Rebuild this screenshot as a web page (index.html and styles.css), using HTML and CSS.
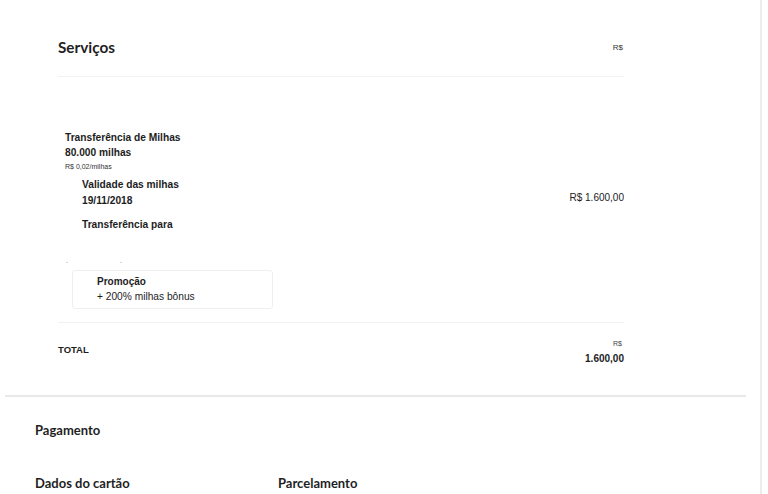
FILE: index.html
```html
<!DOCTYPE html>
<html lang="pt-BR">
<head>
<meta charset="utf-8">
<title>Serviços</title>
<link rel="stylesheet" href="styles.css">
</head>
<body>
<div class="panel">
  <section class="services">
    <div class="svc-head">
      <h2 class="title">Serviços</h2>
      <span class="cur-small">R$</span>
    </div>
    <div class="item">
      <div class="item-info">
        <div class="l-bold">Transferência de Milhas</div>
        <div class="l-bold">80.000 milhas</div>
        <div class="l-unit">R$ 0,02/milhas</div>
        <div class="sub">
          <div class="l-bold sub-a">Validade das milhas</div>
          <div class="l-bold sub-b">19/11/2018</div>
          <div class="l-bold sub-c">Transferência para</div>
        </div>
        <div class="dots"><span></span><span class="d2"></span></div>
      </div>
      <div class="item-price">R$ 1.600,00</div>
    </div>
    <div class="promo">
      <div class="promo-title">Promoção</div>
      <div class="promo-text">+ 200% milhas bônus</div>
    </div>
    <div class="total">
      <div class="total-label">TOTAL</div>
      <div class="total-value">
        <div class="tv-cur">R$</div>
        <div class="tv-num">1.600,00</div>
      </div>
    </div>
  </section>
  <hr class="full-divider">
  <section class="payment">
    <h2 class="h-pay">Pagamento</h2>
    <div class="pay-cols">
      <h3 class="h-col col-a">Dados do cartão</h3>
      <h3 class="h-col">Parcelamento</h3>
    </div>
  </section>
</div>
</body>
</html>
```

FILE: styles.css
```css
html, body {
  margin: 0;
  padding: 0;
  background: #ffffff;
  height: 100%;
  overflow: hidden;
}
body {
  font-family: "Liberation Sans", Arial, sans-serif;
  color: #1d1d1d;
}
.panel {
  width: 762px;
  height: 494px;
  padding-top: 37px;
  box-sizing: border-box;
  border-right: 2px solid #ececec;
  overflow: hidden;
}
.services {
  margin-left: 58px;
  width: 566px;
}
.svc-head {
  display: flex;
  justify-content: space-between;
  align-items: center;
  height: 20px;
  padding-bottom: 19px;
  border-bottom: 1px solid #f2f2f2;
}
.title {
  margin: 0;
  font-family: "Lato", "Noto Sans", sans-serif;
  font-weight: 700;
  font-size: 15.3px;
  color: #1f1f1f;
}
.cur-small {
  font-size: 8px;
  color: #333;
  margin-right: 1px;
}
.item {
  display: flex;
  justify-content: space-between;
  align-items: center;
  padding-left: 7px;
  margin-top: 53px;
}
.l-bold {
  font-weight: 700;
  font-size: 10.2px;
  line-height: 15px;
}
.l-unit {
  font-size: 7px;
  line-height: 14px;
  color: #333;
}
.sub {
  padding-left: 17px;
}
.sub-a { margin-top: 3px; }
.sub-b { margin-top: 1px; }
.sub-c { margin-top: 9px; }
.dots {
  display: flex;
  height: 4px;
  margin-top: 28px;
  align-items: center;
}
.dots span {
  width: 2px;
  height: 1px;
  background: #d8d8d8;
  margin-left: 1px;
}
.dots .d2 {
  margin-left: 52px;
}
.item-price {
  font-size: 10px;
  color: #222;
}
.promo {
  margin-top: 6px;
  margin-left: 14px;
  width: 201px;
  border: 1px solid #efefef;
  border-radius: 3px;
  padding: 4px 0 4px 24px;
  box-sizing: border-box;
}
.promo-title {
  font-weight: 700;
  font-size: 10px;
  line-height: 14px;
}
.promo-text {
  font-size: 10.2px;
  line-height: 14px;
  margin-top: 1px;
}
.total {
  margin-top: 13px;
  border-top: 1px solid #f2f2f2;
  padding-top: 15px;
  display: flex;
  justify-content: space-between;
  align-items: flex-start;
}
.total-label {
  font-weight: 700;
  font-size: 9.5px;
  line-height: 14px;
  margin-top: 5px;
}
.total-value {
  text-align: right;
}
.tv-cur {
  font-size: 7px;
  line-height: 12px;
  color: #444;
  margin-right: 2px;
}
.tv-num {
  font-weight: 700;
  font-size: 10px;
  line-height: 14px;
  margin-top: 2px;
}
.full-divider {
  margin: 29px 14px 0 5px;
  border: 0;
  height: 2px;
  background: #e9e9e9;
}
.payment {
  padding-left: 35px;
}
.h-pay {
  margin: 23px 0 0 0;
  font-family: "Lato", "Noto Sans", sans-serif;
  font-weight: 700;
  font-size: 13px;
  line-height: 20px;
  color: #1f1f1f;
}
.pay-cols {
  display: flex;
  margin-top: 33px;
}
.h-col {
  margin: 0;
  font-family: "Lato", "Noto Sans", sans-serif;
  font-weight: 700;
  font-size: 13px;
  line-height: 20px;
  color: #1f1f1f;
}
.col-a {
  width: 243px;
}
```
